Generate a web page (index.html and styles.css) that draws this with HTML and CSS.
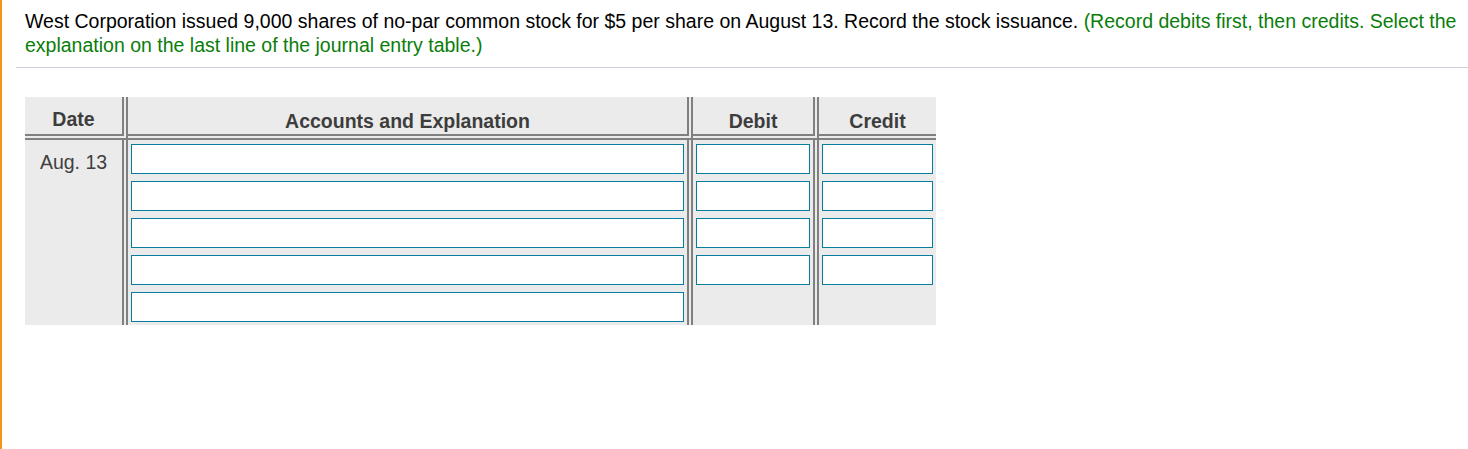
FILE: index.html
```html
<!DOCTYPE html>
<html lang="en">
<head>
<meta charset="utf-8">
<title>Journal entry</title>
<link rel="stylesheet" href="styles.css">
</head>
<body>
<div class="page">
  <div class="question">
    <p class="prompt">West Corporation issued 9,000 shares of no-par common stock for $5 per share on August 13. Record the stock issuance. <span class="hint">(Record debits first, then credits. Select the explanation on the last line of the journal entry table.)</span></p>
  </div>
  <div class="divider"></div>
  <div class="journal">
    <div class="head date-head">Date</div>
    <div class="head">Accounts and Explanation</div>
    <div class="head">Debit</div>
    <div class="head last">Credit</div>

    <div class="date-cell">Aug. 13</div>

    <div class="cell"><input class="field" type="text"></div>
    <div class="cell"><input class="field" type="text"></div>
    <div class="cell last"><input class="field" type="text"></div>

    <div class="cell"><input class="field" type="text"></div>
    <div class="cell"><input class="field" type="text"></div>
    <div class="cell last"><input class="field" type="text"></div>

    <div class="cell"><input class="field" type="text"></div>
    <div class="cell"><input class="field" type="text"></div>
    <div class="cell last"><input class="field" type="text"></div>

    <div class="cell"><input class="field" type="text"></div>
    <div class="cell"><input class="field" type="text"></div>
    <div class="cell last"><input class="field" type="text"></div>

    <div class="cell"><input class="field" type="text"></div>
    <div class="cell"></div>
    <div class="cell last"></div>
  </div>
</div>
</body>
</html>
```

FILE: styles.css
```css
html, body {
  margin: 0;
  padding: 0;
  background: #ffffff;
}

body {
  font-family: "Liberation Sans", Arial, sans-serif;
  font-size: 19.5px;
  line-height: 24px;
  color: #000000;
}

.page {
  border-left: 2px solid #f7941d;
  min-height: 449px;
  box-sizing: border-box;
  padding-left: 14px;
}

.question {
  padding: 9px 4px 10px 9px;
}

.prompt {
  margin: 0;
}

.hint {
  color: #0a7d0a;
}

.divider {
  height: 1px;
  background: #cfcfdb;
}

.journal {
  margin: 29px 0 0 9px;
  width: 911px;
  display: grid;
  grid-template-columns: 103px 565px 126px 117px;
  background: #ebebeb;
}

.head {
  height: 43px;
  box-sizing: border-box;
  border-bottom: 6px double #808080;
  border-right: 6px double #808080;
  display: flex;
  align-items: flex-end;
  justify-content: center;
  padding-bottom: 1px;
  font-weight: bold;
  color: #3d3d3d;
}

.head.date-head {
  padding-bottom: 3px;
}

.head.last,
.cell.last {
  border-right: none;
}

.date-cell {
  grid-column: 1;
  grid-row: 2 / span 5;
  border-right: 6px double #808080;
  text-align: center;
  padding-top: 10px;
  color: #404040;
}

.cell {
  border-right: 6px double #808080;
  padding: 4px 3px 3px 3px;
  height: 30px;
}

.field {
  display: block;
  box-sizing: border-box;
  width: 100%;
  height: 30px;
  margin: 0;
  padding: 0 4px;
  border: 1px solid #0a7c9e;
  border-radius: 0;
  background: #ffffff;
  font-family: inherit;
  font-size: 16px;
  outline: none;
}
```
